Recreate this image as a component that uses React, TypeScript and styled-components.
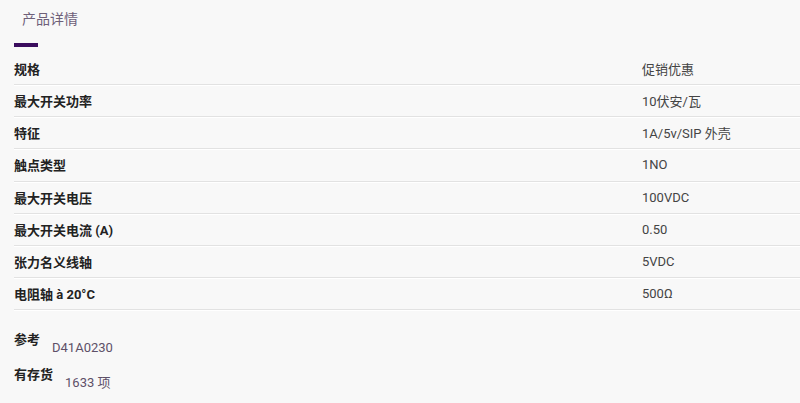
import styled, { createGlobalStyle } from 'styled-components'

const GlobalStyle = createGlobalStyle`
    html, body {
        margin: 0;
        padding: 0;
        background: #f8f8f8;
        font-family: Roboto, "Noto Sans CJK SC", sans-serif;
    }
`

const specs: [string, string][] = [
    ['规格', '促销优惠'],
    ['最大开关功率', '10伏安/瓦'],
    ['特征', '1A/5v/SIP 外壳'],
    ['触点类型', '1NO'],
    ['最大开关电压', '100VDC'],
    ['最大开关电流 (A)', '0.50'],
    ['张力名义线轴', '5VDC'],
    ['电阻轴 à 20°C', '500Ω'],
]

export default function App(){
    return(
        <>
            <GlobalStyle />
            <Page>
                <TabTitle>产品详情</TabTitle>
                <TabBar />
                <SpecTable>
                    {specs.map(([label, value]) => (
                        <Row key={label}>
                            <Label>{label}</Label>
                            <Value>{value}</Value>
                        </Row>
                    ))}
                </SpecTable>
                <Meta>
                    <MetaLine>
                        <MetaLabel>参考</MetaLabel>
                        <MetaValue>D41A0230</MetaValue>
                    </MetaLine>
                    <MetaLine>
                        <MetaLabel>有存货</MetaLabel>
                        <MetaValue>1633 项</MetaValue>
                    </MetaLine>
                </Meta>
            </Page>
        </>
    )
}

const Page = styled.div`
    width: 800px;
    height: 403px;
    padding: 9px 0 0 14px;
    box-sizing: border-box;
    overflow: hidden;
`

const TabTitle = styled.div`
    padding-left: 8px;
    font-size: 14px;
    line-height: 20px;
    color: #6e6079;
`

const TabBar = styled.div`
    width: 24px;
    height: 4px;
    margin-top: 14px;
    background: #3b0d5e;
`

const SpecTable = styled.div`
    margin-top: 6px;
`

const Row = styled.div`
    display: flex;
    align-items: center;
    height: 31.15px;
    border-bottom: 1px solid #e2e2e2;
    box-shadow: 0 1px 0 #ffffff;
    font-size: 13px;
`

const Label = styled.div`
    width: 628px;
    font-weight: bold;
    color: #222;
`

const Value = styled.div`
    color: #444;
`

const Meta = styled.div`
    margin-top: 21px;
    display: flex;
    flex-direction: column;
    gap: 9px;
`

const MetaLine = styled.div`
    display: flex;
    gap: 12px;
    font-size: 13px;
    line-height: 18px;
`

const MetaLabel = styled.div`
    font-weight: bold;
    color: #222;
`

const MetaValue = styled.div`
    padding-top: 8px;
    color: #5e5068;
`
